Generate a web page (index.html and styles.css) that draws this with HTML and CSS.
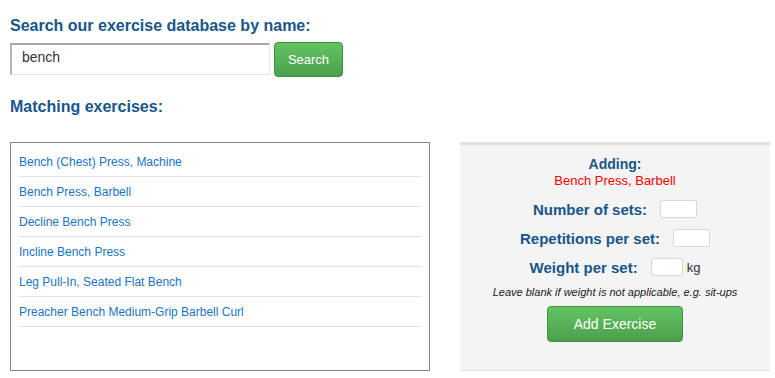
FILE: index.html
```html
<!DOCTYPE html>
<html>
<head>
<meta charset="utf-8">
<title>Exercise search</title>
<link rel="stylesheet" href="styles.css">
</head>
<body>
<div class="page">
  <h2 class="title">Search our exercise database by name:</h2>
  <form class="search">
    <input class="search-input" type="text" value="bench">
    <button class="btn btn-search" type="button">Search</button>
  </form>
  <h2 class="title sub">Matching exercises:</h2>
  <div class="columns">
    <div class="results">
      <ul class="result-list">
        <li><a href="#">Bench (Chest) Press, Machine</a></li>
        <li><a href="#">Bench Press, Barbell</a></li>
        <li><a href="#">Decline Bench Press</a></li>
        <li><a href="#">Incline Bench Press</a></li>
        <li><a href="#">Leg Pull-In, Seated Flat Bench</a></li>
        <li><a href="#">Preacher Bench Medium-Grip Barbell Curl</a></li>
      </ul>
    </div>
    <div class="panel">
      <div class="adding">Adding:</div>
      <div class="adding-name">Bench Press, Barbell</div>
      <div class="field first"><label>Number of sets:</label><input class="small-input" type="text"></div>
      <div class="field"><label>Repetitions per set:</label><input class="small-input" type="text"></div>
      <div class="field"><label>Weight per set:</label><input class="small-input narrow" type="text"><span class="unit">kg</span></div>
      <div class="note">Leave blank if weight is not applicable, e.g. sit-ups</div>
      <button class="btn btn-add" type="button">Add Exercise</button>
    </div>
  </div>
</div>
</body>
</html>
```

FILE: styles.css
```css
* { box-sizing: border-box; }
html, body { margin: 0; padding: 0; background: #fff; }
body { font-family: "Liberation Sans", Arial, sans-serif; color: #333; }

.page { padding: 16px 5px 0 10px; }

.title {
  margin: 0;
  font-size: 16px;
  line-height: 19px;
  font-weight: bold;
  color: #17568a;
}
.title.sub { margin-top: 20px; }

.search { display: flex; align-items: flex-start; gap: 4px; margin: 7px 0 0 0; }
.search-input {
  width: 260px;
  height: 32px;
  margin-top: 1px;
  padding: 0 10px 6px 10px;
  font-family: "Liberation Sans", Arial, sans-serif;
  font-size: 14px;
  color: #333;
  background: #fff;
  border-style: solid;
  border-width: 2px 1px 1px 2px;
  border-color: #a9a9a9 #e6e6e6 #e6e6e6 #b4b4b4;
  outline: none;
}
.btn {
  font-family: "Liberation Sans", Arial, sans-serif;
  color: #fff;
  border: 1px solid #3f8f3f;
  border-radius: 4px;
  background: linear-gradient(#62c462, #4d9f4d);
  cursor: pointer;
}
.btn-search { width: 69px; height: 35px; font-size: 13px; padding: 0; }

.columns { display: flex; gap: 30px; margin-top: 26px; }
.results {
  width: 420px;
  height: 229px;
  border: 1px solid #858585;
  padding: 4px 8px 0 8px;
}
.result-list { list-style: none; margin: 0; padding: 0; }
.result-list li {
  height: 30px;
  border-bottom: 1px solid #e3e3e3;
  font-size: 12px;
}
.result-list li a {
  display: block;
  height: 29px;
  line-height: 30px;
  color: #1a74c6;
  text-decoration: none;
}

.panel {
  width: 310px;
  height: 229px;
  background: #f4f4f4;
  border-top: 3px solid #e2e2e2;
  border-bottom: 1px solid #e2e2e2;
  display: flex;
  flex-direction: column;
  align-items: center;
  padding-top: 12px;
}
.adding { font-size: 14px; font-weight: bold; color: #17568a; line-height: 14px; }
.adding-name { font-size: 13px; color: #f00; line-height: 15px; margin-top: 2px; }
.field { display: flex; align-items: center; height: 20px; margin-top: 9px; }
.field.first { margin-top: 11px; }
.field label { font-size: 15px; font-weight: bold; color: #17568a; margin-right: 13px; }
.small-input {
  width: 37px;
  height: 18px;
  border: 1px solid #d8d8d8;
  border-radius: 2px;
  background: #fff;
  padding: 0;
}
.small-input.narrow { width: 32px; }
.unit { font-size: 13px; color: #333; margin-left: 4px; }
.note { font-size: 11px; font-style: italic; color: #222; margin-top: 9px; line-height: 13px; }
.btn-add { width: 136px; height: 36px; font-size: 14px; margin-top: 7px; padding: 0; }
```
